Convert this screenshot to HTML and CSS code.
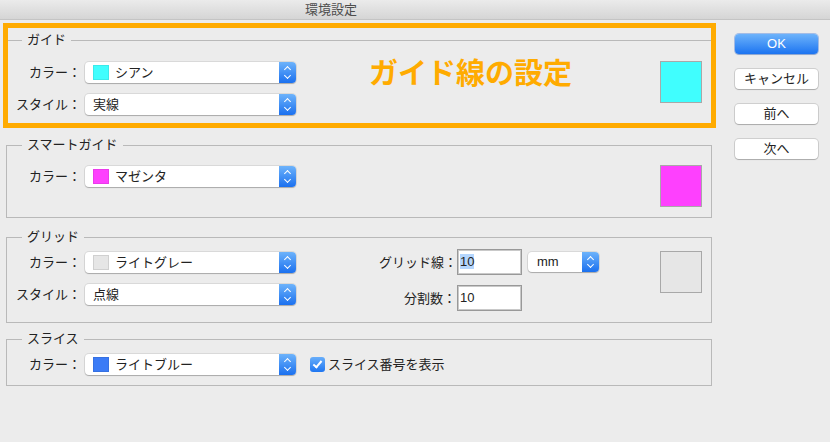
FILE: index.html
```html
<!DOCTYPE html>
<html lang="ja">
<head>
    <meta charset="UTF-8">
    <title>環境設定</title>
    <link rel="stylesheet" href="styles.css">
</head>
<body>
    <div class="titlebar">環境設定</div>

    <div class="window">
        <div class="panels">
            <div class="highlight">
                <fieldset class="group guide">
                    <legend>ガイド</legend>
                    <div class="group-body">
                        <div class="form">
                            <label>カラー：</label>
                            <div class="popup"><span class="chip cyan"></span>シアン<span class="stepper"></span></div>
                            <label>スタイル：</label>
                            <div class="popup">実線<span class="stepper"></span></div>
                        </div>
                        <div class="note">ガイド線の設定</div>
                        <div class="swatch cyan"></div>
                    </div>
                </fieldset>
            </div>

            <fieldset class="group smart">
                <legend>スマートガイド</legend>
                <div class="group-body">
                    <div class="form">
                        <label>カラー：</label>
                        <div class="popup"><span class="chip magenta"></span>マゼンタ<span class="stepper"></span></div>
                    </div>
                    <div class="swatch magenta"></div>
                </div>
            </fieldset>

            <fieldset class="group grid">
                <legend>グリッド</legend>
                <div class="group-body">
                    <div class="form">
                        <label>カラー：</label>
                        <div class="popup"><span class="chip lightgray"></span>ライトグレー<span class="stepper"></span></div>
                        <label>スタイル：</label>
                        <div class="popup">点線<span class="stepper"></span></div>
                    </div>
                    <div class="form numbers">
                        <label>グリッド線：</label>
                        <div class="field"><span class="selected">10</span></div>
                        <div class="popup small">mm<span class="stepper"></span></div>
                        <label>分割数：</label>
                        <div class="field">10</div>
                    </div>
                    <div class="swatch lightgray"></div>
                </div>
            </fieldset>

            <fieldset class="group slice">
                <legend>スライス</legend>
                <div class="group-body">
                    <div class="form">
                        <label>カラー：</label>
                        <div class="popup"><span class="chip blue"></span>ライトブルー<span class="stepper"></span></div>
                    </div>
                    <div class="check">
                        <span class="box"></span>スライス番号を表示
                    </div>
                </div>
            </fieldset>
        </div>

        <div class="buttons">
            <button class="btn primary">OK</button>
            <button class="btn">キャンセル</button>
            <button class="btn">前へ</button>
            <button class="btn">次へ</button>
        </div>
    </div>
</body>
</html>
```

FILE: styles.css
```css
body {
    margin: 0;
    background: #ececec;
    color: #222;
    font-family: "Liberation Sans", "Noto Sans CJK JP", sans-serif;
    font-size: 13px;
    line-height: 16px;
}
.titlebar {
    height: 19px;
    line-height: 19px;
    padding-left: 305px;
    color: #4d4d4d;
    background: linear-gradient(#ebebeb, #d5d5d5);
    border-bottom: 1px solid #c4c4c4;
}
.window {
    display: flex;
    align-items: flex-start;
}
.panels {
    width: 706px;
    margin-left: 6px;
}
.buttons {
    display: flex;
    flex-direction: column;
    gap: 15px;
    width: 83px;
    margin-left: 23px;
    padding-top: 14px;
}
.btn {
    height: 20px;
    padding: 0;
    border: none;
    border-radius: 4px;
    background: #fff;
    font: inherit;
    color: #222;
    box-shadow: 0 0 0 1px rgba(0, 0, 0, 0.12), 0 1px 1px rgba(0, 0, 0, 0.18);
}
.btn.primary {
    color: #fff;
    background: linear-gradient(#6db3fb, #1c74f1);
    box-shadow: 0 0 0 1px rgba(30, 100, 220, 0.35), 0 1px 1px rgba(0, 0, 0, 0.15);
}

/* annotation frame around the guide group */
.highlight {
    margin: 3px -4px 0 -3px;
    border: 5px solid #ffab00;
}

.group {
    margin: 0;
    padding: 7px 9px 10px 0;
    border: 1px solid #b9b9b9;
    min-width: 0;
}
.group legend {
    margin-left: 15px;
    padding: 0 5px;
    line-height: 16px;
}
.group-body {
    display: flex;
    align-items: flex-start;
}
.guide {
    margin-top: 4px;
    padding: 14px 9px 8px 0;
    border: none;
    border-top: 1px solid #b9b9b9;
}
.guide legend {
    margin-left: 14px;
}
.smart {
    margin-top: 9px;
    padding-top: 13px;
}
.grid {
    margin-top: 11px;
    padding-bottom: 11px;
}
.slice {
    margin-top: 8px;
}

.form {
    display: grid;
    grid-template-columns: 74px 211px;
    column-gap: 4px;
    row-gap: 11px;
    align-items: center;
}
.guide .form {
    grid-template-columns: 73px 211px;
}
.form label {
    text-align: right;
    line-height: 21px;
    white-space: nowrap;
}

.popup {
    display: flex;
    align-items: center;
    height: 21px;
    padding-left: 8px;
    box-sizing: border-box;
    background: #fff;
    border-radius: 4px;
    box-shadow: 0 0 0 1px rgba(0, 0, 0, 0.08), 0 1px 1px rgba(0, 0, 0, 0.22);
    white-space: nowrap;
}
.popup.small {
    width: 71px;
    height: 20px;
    margin-left: 6px;
    padding-left: 9px;
}
.stepper {
    position: relative;
    align-self: stretch;
    width: 17px;
    margin-left: auto;
    border-radius: 0 4px 4px 0;
    background: linear-gradient(#6db3fb, #1b70ef);
}
.stepper::before,
.stepper::after {
    content: "";
    position: absolute;
    left: 6px;
    width: 4px;
    height: 4px;
    border-left: 1.5px solid #fff;
    border-top: 1.5px solid #fff;
}
.stepper::before {
    top: 5px;
    transform: rotate(45deg);
}
.stepper::after {
    bottom: 5px;
    transform: rotate(225deg);
}

.chip {
    width: 16px;
    height: 15px;
    margin-right: 6px;
    box-sizing: border-box;
    border: 1px solid rgba(0, 0, 0, 0.08);
}
.cyan { background: #40fefe; }
.magenta { background: #fe40fe; }
.lightgray { background: #e6e6e6; }
.blue { background: #3b7bf6; }
.chip.lightgray {
    border-color: #d0d0d0;
}

.swatch {
    width: 42px;
    height: 42px;
    margin: -1px 0 0 auto;
    box-sizing: border-box;
    border: 1px solid #a8a8a8;
}

.note {
    margin: -3px 0 0 73px;
    color: #ffab00;
    font-size: 29px;
    font-weight: bold;
    line-height: 30px;
    white-space: nowrap;
}

.numbers {
    grid-template-columns: 78px 65px auto;
    column-gap: 0;
    row-gap: 10px;
    margin: -3px 0 0 83px;
}
.numbers label {
    padding-right: 1px;
}
.field {
    height: 26px;
    padding-left: 2px;
    box-sizing: border-box;
    background: #fff;
    border: 1px solid #999;
    box-shadow: inset 0 0 0 1px #c9c9c9;
    line-height: 24px;
}
.selected {
    background: #b4d6fe;
}

.check {
    display: flex;
    align-items: center;
    height: 21px;
    margin-left: 14px;
    white-space: nowrap;
}
.check .box {
    position: relative;
    width: 15px;
    height: 15px;
    margin-right: 3px;
    border-radius: 3px;
    background: linear-gradient(#68aefa, #1f76f1);
}
.check .box::after {
    content: "";
    position: absolute;
    left: 5px;
    top: 2px;
    width: 3px;
    height: 7px;
    border-right: 2px solid #fff;
    border-bottom: 2px solid #fff;
    transform: rotate(40deg);
}
```
